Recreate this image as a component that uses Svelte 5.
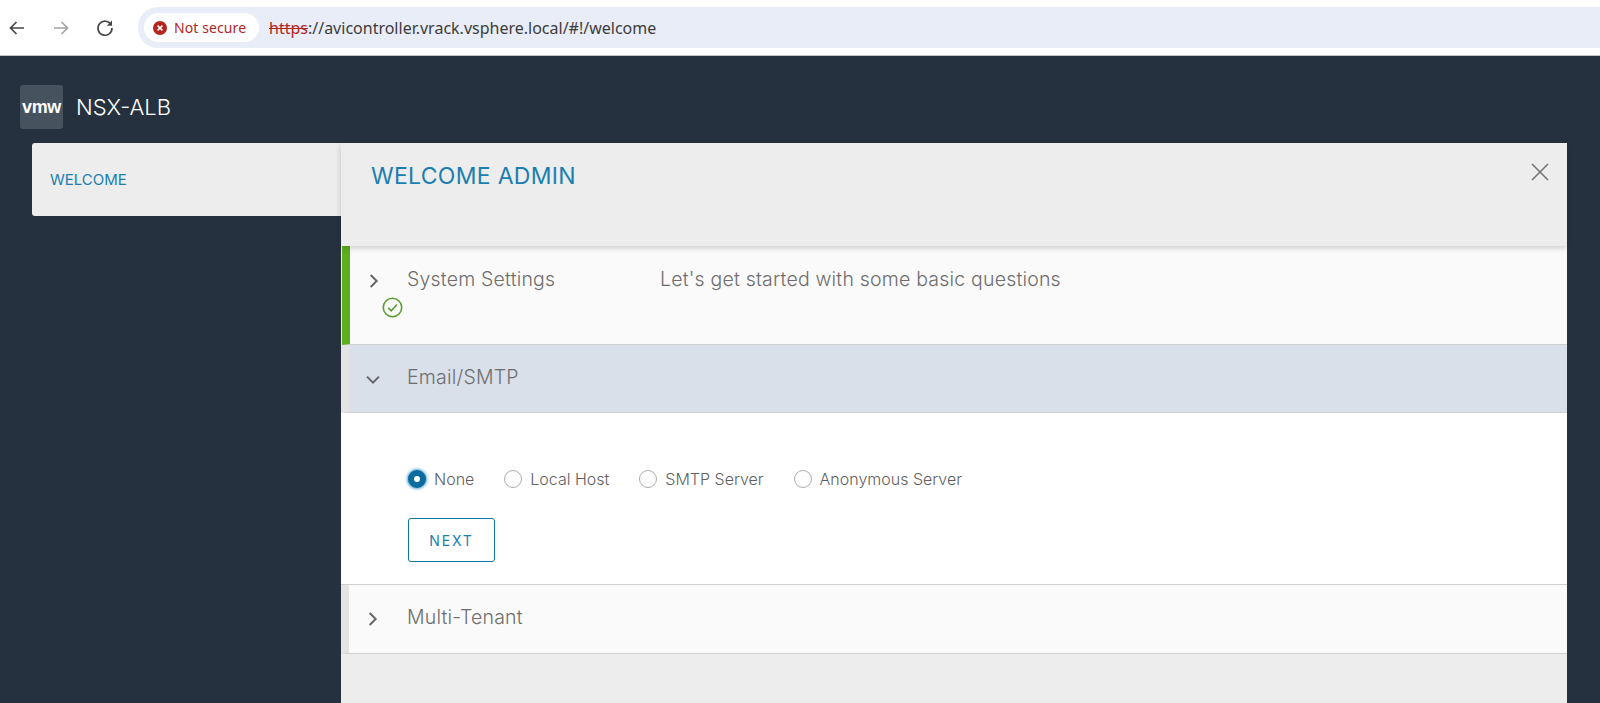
<script>
  const options = [
    { label: 'None', selected: true },
    { label: 'Local Host', selected: false },
    { label: 'SMTP Server', selected: false },
    { label: 'Anonymous Server', selected: false }
  ];
</script>

<div class="page">
  <header class="browser">
    <div class="nav">
      <svg class="nav-icon" viewBox="0 0 20 20"><path d="M17 10H4M9.5 4L3.5 10l6 6" fill="none" stroke="#474747" stroke-width="1.7"/></svg>
      <svg class="nav-icon" viewBox="0 0 20 20"><path d="M3 10h13M10.5 4l6 6-6 6" fill="none" stroke="#a3a3a3" stroke-width="1.7"/></svg>
      <svg class="nav-icon" viewBox="0 0 20 20"><path d="M16 6.6A7 7 0 1 0 17 10" fill="none" stroke="#474747" stroke-width="1.7"/><path d="M17 2.5v5.2h-5.2z" fill="#474747"/></svg>
    </div>
    <div class="omnibox">
      <div class="chip">
        <svg class="err" viewBox="0 0 14 14"><circle cx="7" cy="7" r="7" fill="#b3261e"/><path d="M4.6 4.6l4.8 4.8M9.4 4.6l-4.8 4.8" stroke="#fff" stroke-width="1.6"/></svg>
        <span>Not secure</span>
      </div>
      <div class="url"><s>https</s>://avicontroller.vrack.vsphere.local/#!/welcome</div>
    </div>
  </header>

  <main class="app">
    <div class="brand">
      <div class="logo">vmw</div>
      <div class="product">NSX-ALB</div>
    </div>

    <div class="workspace">
      <nav class="tab">WELCOME</nav>
      <section class="panel">
        <div class="panel-head">
          <h1>WELCOME ADMIN</h1>
          <svg class="close" viewBox="0 0 18 18"><path d="M1 1l16 16M17 1L1 17" stroke="#737373" stroke-width="1.6"/></svg>
        </div>

        <div class="step done">
          <div class="step-icons">
            <svg class="chev" viewBox="0 0 12 12"><path d="M3.5 1.5L8 6l-4.5 4.5" fill="none" stroke="#666" stroke-width="1.5"/></svg>
            <svg class="check" viewBox="0 0 20 20"><circle cx="10" cy="10" r="8.8" fill="none" stroke="#5b9a32" stroke-width="1.5"/><path d="M5.8 10.2l3 3 5.4-6" fill="none" stroke="#5b9a32" stroke-width="1.5"/></svg>
          </div>
          <div class="step-title">System Settings</div>
          <div class="step-desc">Let's get started with some basic questions</div>
        </div>

        <div class="step open">
          <div class="step-icons">
            <svg class="chev" viewBox="0 0 12 12"><path d="M1.5 3.5L6 8l4.5-4.5" fill="none" stroke="#666" stroke-width="1.5"/></svg>
          </div>
          <div class="step-title">Email/SMTP</div>
        </div>

        <div class="step-body">
          <div class="radios">
            {#each options as o}
              <div class="radio-item">
                <span class="radio" class:selected={o.selected}></span>
                <span>{o.label}</span>
              </div>
            {/each}
          </div>
          <button class="next">NEXT</button>
        </div>

        <div class="step closed">
          <div class="step-icons">
            <svg class="chev" viewBox="0 0 12 12"><path d="M3.5 1.5L8 6l-4.5 4.5" fill="none" stroke="#666" stroke-width="1.5"/></svg>
          </div>
          <div class="step-title">Multi-Tenant</div>
        </div>
      </section>
    </div>
  </main>
</div>

<style>
  :global(body) {
    margin: 0;
    overflow: hidden;
    background: #25313e;
  }
  .page {
    height: 703px;
    display: flex;
    flex-direction: column;
    overflow: hidden;
  }
  .browser {
    height: 56px;
    box-sizing: border-box;
    background: #fff;
    border-bottom: 1px solid #c4c4c4;
    display: flex;
    align-items: center;
    padding-left: 7px;
    flex: none;
  }
  .nav {
    display: flex;
    gap: 24px;
    width: 131px;
    flex: none;
  }
  .nav-icon {
    width: 20px;
    height: 20px;
  }
  .omnibox {
    flex: 1;
    height: 41px;
    background: #e9edf7;
    border-radius: 20px 0 0 20px;
    display: flex;
    align-items: center;
    padding-left: 6px;
    gap: 10px;
  }
  .chip {
    width: 115px;
    height: 29px;
    box-sizing: border-box;
    background: #fff;
    border-radius: 15px;
    display: flex;
    align-items: center;
    gap: 7px;
    padding-left: 9px;
    font: 14px "Noto Sans", sans-serif;
    color: #b3261e;
    letter-spacing: 0.1px;
  }
  .err {
    width: 14px;
    height: 14px;
  }
  .url {
    font: 16px "Noto Sans", sans-serif;
    color: #3c3c3c;
    letter-spacing: 0;
  }
  .url s {
    color: #b3261e;
  }
  .app {
    flex: 1;
    display: flex;
    flex-direction: column;
    min-height: 0;
    font-family: Inter, "Noto Sans", sans-serif;
  }
  .brand {
    display: flex;
    align-items: center;
    gap: 13px;
    padding: 29px 0 0 20px;
    height: 44px;
    flex: none;
  }
  .logo {
    width: 43px;
    height: 44px;
    background: #46525d;
    border-radius: 3px;
    color: #fff;
    font: 700 18px "Liberation Sans", sans-serif;
    letter-spacing: -0.4px;
    display: flex;
    align-items: center;
    justify-content: center;
  }
  .product {
    color: #fff;
    font-size: 22px;
    font-weight: 300;
  }
  .workspace {
    flex: 1;
    display: flex;
    margin: 14px 33px 0 32px;
    min-height: 0;
  }
  .tab {
    width: 309px;
    height: 73px;
    box-sizing: border-box;
    background: #ededed;
    border-radius: 3px 0 0 3px;
    color: #1a7fb0;
    font-size: 15px;
    font-weight: 400;
    padding: 27px 0 0 18px;
    flex: none;
  }
  .panel {
    flex: 1;
    background: #ededed;
    display: flex;
    flex-direction: column;
  }
  .panel-head {
    height: 103px;
    box-sizing: border-box;
    display: flex;
    justify-content: space-between;
    align-items: flex-start;
    padding: 20px 18px 0 30px;
    box-shadow: 0 2px 6px rgba(0, 0, 0, 0.18);
    position: relative;
    flex: none;
  }
  h1 {
    margin: 0;
    color: #1a7fb0;
    font-size: 23px;
    font-weight: 400;
    line-height: 26px;
    letter-spacing: 0.3px;
  }
  .close {
    width: 18px;
    height: 18px;
  }
  .step {
    display: flex;
    box-sizing: border-box;
    border-bottom: 1px solid #cfcfcf;
    border-left: 8px solid #e4e4e4;
    background: #fafafa;
    color: #6e6e6e;
    font-size: 19.5px;
    font-weight: 300;
    letter-spacing: 0.2px;
    flex: none;
  }
  .step.done {
    height: 99px;
    margin-left: 1px;
    border-left: 8px solid #5fae1e;
    padding-top: 21px;
  }
  .step.open {
    height: 68px;
    background: #d9e0ea;
    padding-top: 20px;
  }
  .step.closed {
    height: 69px;
    padding-top: 20px;
  }
  .step-icons {
    width: 58px;
    flex: none;
    position: relative;
    padding-top: 6px;
  }
  .done .step-icons {
    width: 57px;
  }
  .open .step-icons {
    padding-top: 7px;
  }
  .chev {
    display: block;
    width: 16px;
    height: 16px;
    margin-left: 16px;
  }
  .check {
    position: absolute;
    left: 32px;
    top: 30px;
    width: 21px;
    height: 21px;
  }
  .step-title {
    width: 253px;
    flex: none;
  }
  .step-body {
    height: 172px;
    box-sizing: border-box;
    background: #fff;
    border-bottom: 1px solid #cfcfcf;
    padding: 56px 0 0 67px;
    flex: none;
  }
  .radios {
    display: flex;
    gap: 30px;
    align-items: center;
    height: 20px;
    font-size: 16px;
    color: #5f5f5f;
    font-weight: 300;
  }
  .radio-item {
    display: flex;
    align-items: center;
    gap: 8px;
  }
  .radio {
    width: 18px;
    height: 18px;
    box-sizing: border-box;
    border: 1px solid #adadad;
    border-radius: 50%;
    background: #fff;
  }
  .radio.selected {
    border: 6.5px solid #0a6c9e;
    box-shadow: 0 0 3px 1px #4f9fcb;
  }
  .next {
    display: block;
    width: 87px;
    height: 44px;
    margin-top: 29px;
    box-sizing: border-box;
    background: #fff;
    border: 1px solid #0f77a8;
    border-radius: 3px;
    color: #1a7fb0;
    font: 400 14px Inter, "Noto Sans", sans-serif;
    letter-spacing: 1.9px;
    padding: 0;
  }
</style>
